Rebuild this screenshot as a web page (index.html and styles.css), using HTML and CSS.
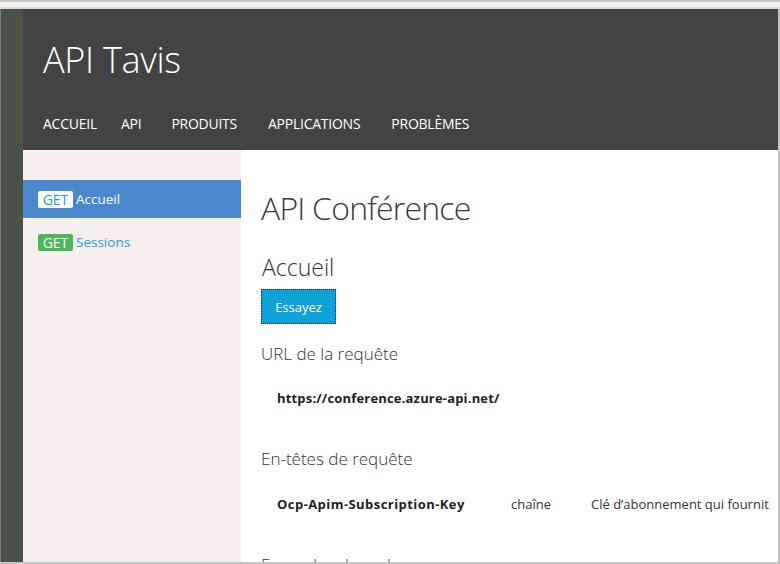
FILE: index.html
```html
<!DOCTYPE html>
<html lang="fr">
<head>
<meta charset="utf-8">
<title>API Tavis</title>
<link rel="stylesheet" href="styles.css">
</head>
<body>
<div class="window">
  <div class="topline"></div>
  <div class="topstrip"></div>
  <div class="frame">
    <div class="leftstrip"></div>
    <div class="main">
      <header class="header">
        <div class="brand">API Tavis</div>
        <nav class="nav">
          <a class="nav-item">ACCUEIL</a>
          <a class="nav-item">API</a>
          <a class="nav-item">PRODUITS</a>
          <a class="nav-item">APPLICATIONS</a>
          <a class="nav-item">PROBLÈMES</a>
        </nav>
      </header>
      <div class="body">
        <aside class="sidebar">
          <div class="op active"><span class="badge">GET</span><span class="op-name">Accueil</span></div>
          <div class="op"><span class="badge green">GET</span><span class="op-name">Sessions</span></div>
        </aside>
        <section class="content">
          <h1 class="title">API Conférence</h1>
          <h2 class="op-title">Accueil</h2>
          <button class="try">Essayez</button>
          <h3 class="section">URL de la requête</h3>
          <div class="url">https://conference.azure-api.net/</div>
          <h3 class="section headers">En-têtes de requête</h3>
          <div class="param">
            <span class="p-key">Ocp-Apim-Subscription-Key</span>
            <span class="p-type">chaîne</span>
            <span class="p-desc">Clé d’abonnement qui fournit</span>
          </div>
          <h3 class="section samples">Exemples de code</h3>
        </section>
      </div>
    </div>
    <div class="rightstrip"></div>
  </div>
  <div class="bottomline"></div>
</div>
</body>
</html>
```

FILE: styles.css
```css
html, body {
  margin: 0;
  padding: 0;
  background: #ffffff;
}
body {
  font-family: "Open Sans", "Noto Sans", sans-serif;
  overflow: hidden;
}
.window {
  width: 780px;
  height: 564px;
  display: flex;
  flex-direction: column;
  overflow: hidden;
}
.topline {
  height: 2px;
  background: #c9c9c9;
  flex: none;
}
.topstrip {
  height: 5px;
  background: #f6eff0;
  border-bottom: 2px solid #dcdcdc;
  flex: none;
}
.frame {
  flex: 1;
  display: flex;
  min-height: 0;
}
.leftstrip {
  width: 22px;
  flex: none;
  background: #4a5248;
  border-left: 1px solid #7a7a7a;
}
.rightstrip {
  width: 2px;
  flex: none;
  background: #c4c4c4;
}
.bottomline {
  height: 2px;
  background: #c4c6c4;
  flex: none;
}
.main {
  flex: 1;
  display: flex;
  flex-direction: column;
  min-width: 0;
}
.header {
  height: 141px;
  flex: none;
  background: #434343;
  color: #ffffff;
  padding: 29px 0 0 20px;
  box-sizing: border-box;
}
.brand {
  font-size: 36px;
  font-weight: 300;
  line-height: 44px;
  letter-spacing: -0.3px;
}
.nav {
  display: flex;
  margin-top: 32px;
}
.nav-item {
  font-size: 14px;
  line-height: 20px;
  color: #ffffff;
  letter-spacing: -0.25px;
  margin-right: 31px;
}
.nav-item:nth-child(1) { margin-right: 24px; }
.nav-item:nth-child(2) { margin-right: 30px; }
.body {
  flex: 1;
  display: flex;
  min-height: 0;
}
.sidebar {
  width: 218px;
  flex: none;
  background: #f6eeef;
  padding-top: 30px;
  box-sizing: border-box;
}
.op {
  height: 38px;
  display: flex;
  align-items: center;
  padding-left: 15px;
  margin-bottom: 5px;
  font-size: 13.5px;
  color: #1ba1e2;
}
.op.active {
  background: #4a87cc;
  color: #ffffff;
}
.badge {
  display: inline-block;
  width: 35px;
  height: 17px;
  line-height: 17px;
  text-align: center;
  border-radius: 2px;
  background: #ffffff;
  color: #1ba1e2;
  font-size: 14px;
  margin-right: 3px;
}
.badge.green {
  background: #4cb85a;
  color: #ffffff;
}
.content {
  flex: 1;
  min-width: 0;
  background: #ffffff;
  padding: 38px 0 0 20px;
  overflow: hidden;
  color: #333333;
}
.title {
  margin: 0;
  font-size: 32px;
  font-weight: 300;
  line-height: 40px;
  letter-spacing: -0.8px;
  color: #3a3a3a;
}
.op-title {
  margin: 24px 0 0 1px;
  font-size: 23px;
  font-weight: 300;
  line-height: 30px;
  color: #333333;
}
.try {
  display: block;
  margin-top: 7px;
  width: 75px;
  height: 35px;
  background: #0fa2d9;
  color: #ffffff;
  border: 1px dotted #222222;
  font-family: inherit;
  font-size: 13px;
  padding: 0;
}
.section {
  margin: 18px 0 0 0;
  font-size: 17px;
  font-weight: 300;
  line-height: 24px;
  color: #333333;
}
.url {
  margin: 22px 0 0 16px;
  font-size: 13px;
  font-weight: 700;
  line-height: 20px;
  letter-spacing: 0.18px;
  color: #222222;
}
.section.headers {
  margin-top: 39px;
}
.param {
  margin: 23px 0 0 16px;
  display: grid;
  grid-template-columns: 234px 80px auto;
  font-size: 13px;
  line-height: 20px;
  white-space: nowrap;
  color: #333333;
}
.p-key {
  font-weight: 700;
  letter-spacing: 0.44px;
  color: #222222;
}
.section.samples {
  margin-top: 39px;
}
```
